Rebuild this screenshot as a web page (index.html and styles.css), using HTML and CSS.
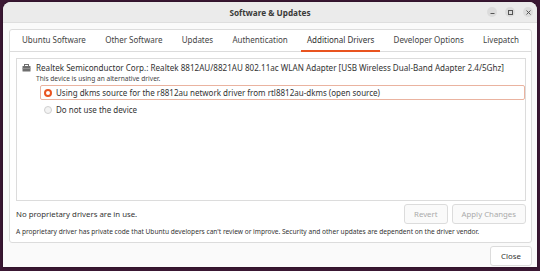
FILE: index.html
```html
<!DOCTYPE html>
<html lang="en">
<head>
    <meta charset="UTF-8">
    <title>Software &amp; Updates</title>
    <link rel="stylesheet" href="styles.css">
</head>
<body>
    <div class="window">
        <div class="titlebar">
            <span></span>
            <span class="title">Software &amp; Updates</span>
            <div class="controls">
                <span class="ctl">
                    <svg width="9" height="9" viewBox="0 0 9 9"><path d="M2.5 5.5h4" stroke="#555" stroke-width="1"/></svg>
                </span>
                <span class="ctl">
                    <svg width="9" height="9" viewBox="0 0 9 9"><rect x="2.5" y="2.5" width="4" height="4" fill="none" stroke="#555" stroke-width="1"/></svg>
                </span>
                <span class="ctl">
                    <svg width="9" height="9" viewBox="0 0 9 9"><path d="M2.5 2.5l4 4M6.5 2.5l-4 4" stroke="#555" stroke-width="1"/></svg>
                </span>
            </div>
        </div>

        <div class="content">
            <div class="notebook">
                <div class="tabs">
                    <span class="tab">Ubuntu Software</span>
                    <span class="tab">Other Software</span>
                    <span class="tab">Updates</span>
                    <span class="tab">Authentication</span>
                    <span class="tab active">Additional Drivers</span>
                    <span class="tab">Developer Options</span>
                    <span class="tab">Livepatch</span>
                </div>

                <div class="page">
                    <div class="device-list">
                        <div class="device">
                            <svg class="device-icon" width="9" height="8" viewBox="0 0 9 8">
                                <rect x="0.5" y="2" width="8" height="5.5" rx="0.5" fill="#6e6e6e"/>
                                <rect x="2.5" y="0.5" width="4" height="2" fill="none" stroke="#6e6e6e" stroke-width="1"/>
                                <rect x="0.5" y="4" width="8" height="0.8" fill="#9a9a9a"/>
                            </svg>
                            <div>
                                <div class="device-name">Realtek Semiconductor Corp.: Realtek 8812AU/8821AU 802.11ac WLAN Adapter [USB Wireless Dual-Band Adapter 2.4/5Ghz]</div>
                                <div class="device-note">This device is using an alternative driver.</div>
                            </div>
                        </div>
                        <label class="option selected">
                            <span class="radio on"></span>
                            <span>Using dkms source for the r8812au network driver from rtl8812au-dkms (open source)</span>
                        </label>
                        <label class="option">
                            <span class="radio"></span>
                            <span>Do not use the device</span>
                        </label>
                    </div>

                    <div class="status-row">
                        <span class="status">No proprietary drivers are in use.</span>
                        <div class="actions">
                            <button class="btn" disabled>Revert</button>
                            <button class="btn" disabled>Apply Changes</button>
                        </div>
                    </div>
                    <p class="caption">A proprietary driver has private code that Ubuntu developers can't review or improve. Security and other updates are dependent on the driver vendor.</p>
                </div>
            </div>

            <div class="footer">
                <button class="btn close-btn">Close</button>
            </div>
        </div>
    </div>
</body>
</html>
```

FILE: styles.css
```css
* {
    margin: 0;
    padding: 0;
    box-sizing: border-box;
}

body {
    font-family: 'Noto Sans', 'Open Sans', sans-serif;
    font-size: 8px;
    color: #333;
    background: #3a1733;
    width: 540px;
    height: 271px;
    padding: 2px 3px 4px 3px;
    overflow: hidden;
}

.window {
    height: 265px;
    background: #fafafa;
    border-radius: 8px 8px 0 0;
    box-shadow: 0 0 2px rgba(0,0,0,0.5);
    display: flex;
    flex-direction: column;
    overflow: hidden;
}

.titlebar {
    height: 21px;
    background: #ebebeb;
    border-bottom: 1px solid #dedede;
    display: grid;
    grid-template-columns: 1fr auto 1fr;
    align-items: center;
}

.title {
    font-weight: 700;
    font-size: 8.2px;
    color: #3a3a3a;
}

.controls {
    display: flex;
    justify-content: flex-end;
    gap: 8px;
    padding-right: 4px;
}

.ctl {
    width: 10px;
    height: 10px;
    border-radius: 50%;
    background: #dcdcdc;
    display: flex;
    align-items: center;
    justify-content: center;
}

.ctl svg {
    width: 9px;
    height: 9px;
}

.content {
    flex: 1;
    padding: 6px 5px 0 6px;
    display: flex;
    flex-direction: column;
}

.notebook {
    background: #fff;
    border: 1px solid #dcdcdc;
    border-radius: 3px;
}

.tabs {
    height: 22px;
    display: flex;
    justify-content: space-between;
    align-items: stretch;
    padding: 0 6px;
    border-bottom: 1px solid #dcdcdc;
}

.tab {
    display: flex;
    align-items: center;
    padding: 0 6px 1px;
    color: #444;
    border-bottom: 2px solid transparent;
    margin-bottom: -1px;
}

.tab.active {
    border-bottom-color: #e95420;
    color: #333;
}

.page {
    padding: 6px 5px 6px 6px;
}

.device-list {
    height: 143px;
    border: 1px solid #dcdcdc;
    background: #fff;
    padding: 3px 0 0 5px;
}

.device {
    display: flex;
    align-items: flex-start;
    gap: 5px;
}

.device-icon {
    margin-top: 2px;
    flex-shrink: 0;
}

.device-name {
    font-size: 8.1px;
    line-height: 12px;
    white-space: nowrap;
}

.device-note {
    font-size: 6.6px;
    line-height: 10px;
    color: #444;
}

.option {
    display: flex;
    align-items: center;
    gap: 4px;
    height: 15px;
    margin-left: 18px;
    padding-left: 3px;
    border: 1px solid transparent;
    border-radius: 2px;
}

.option.selected {
    border-color: #eab3a0;
    margin-top: 1px;
}

.option + .option {
    margin-top: 2px;
}

.radio {
    width: 8px;
    height: 8px;
    border-radius: 50%;
    border: 1px solid #cfcfcf;
    background: #f3f3f3;
    flex-shrink: 0;
}

.radio.on {
    background: #fff;
    border: 2.5px solid #e95420;
}

.status-row {
    display: flex;
    justify-content: space-between;
    align-items: center;
    padding-top: 3px;
}

.status {
    font-size: 7.8px;
}

.actions {
    display: flex;
    gap: 4px;
}

.btn {
    font-family: inherit;
    font-size: 7.8px;
    height: 20px;
    padding: 0 9px;
    border: 1px solid #dcdcdc;
    border-radius: 3px;
    background: #f7f7f7;
    color: #333;
}

.btn:disabled {
    color: #aaa;
    background: #fafafa;
}

.caption {
    font-size: 6.6px;
    color: #333;
    padding-top: 3px;
}

.footer {
    display: flex;
    justify-content: flex-end;
    padding-top: 3px;
}

.close-btn {
    width: 42px;
    background: #fff;
}
```
